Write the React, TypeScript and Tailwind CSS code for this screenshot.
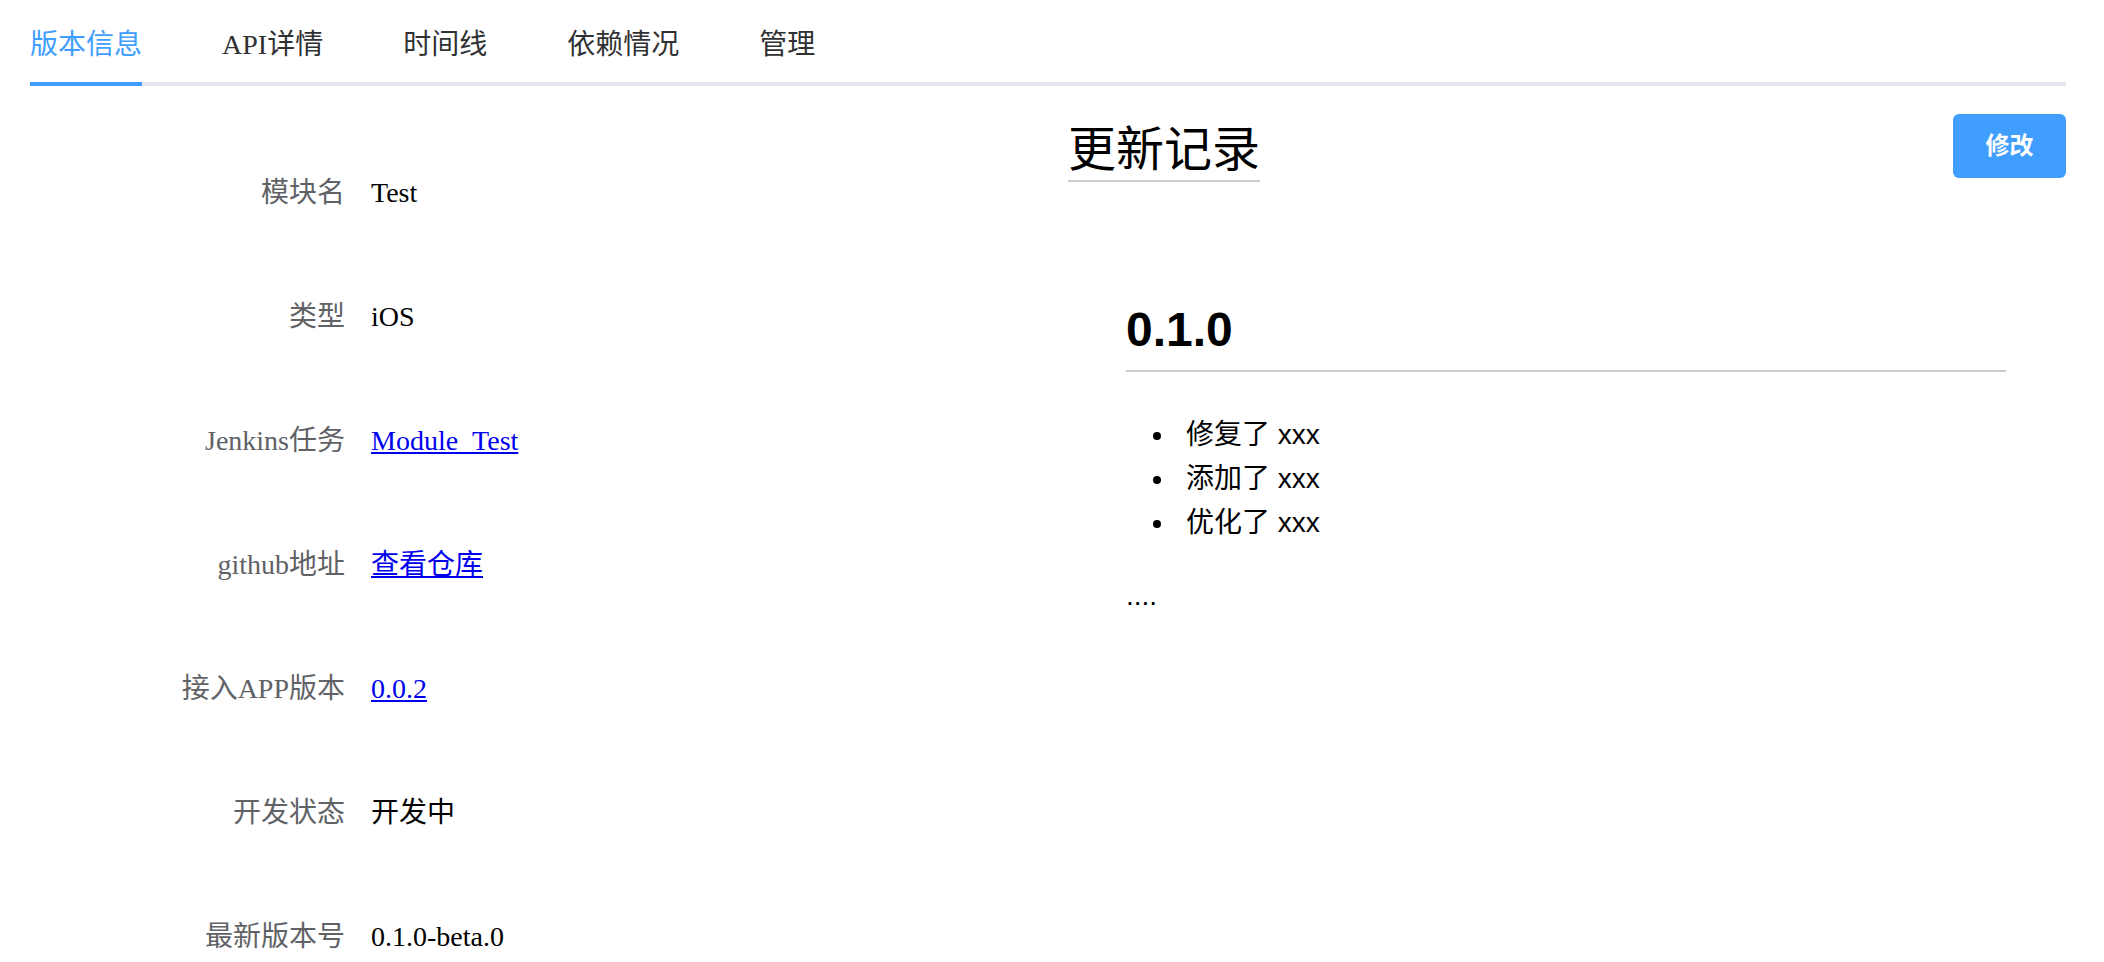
import React from 'react';

const tabs = ['版本信息', 'API详情', '时间线', '依赖情况', '管理'];

const fields: { label: string; value: string; link?: boolean }[] = [
  { label: '模块名', value: 'Test' },
  { label: '类型', value: 'iOS' },
  { label: 'Jenkins任务', value: 'Module_Test', link: true },
  { label: 'github地址', value: '查看仓库', link: true },
  { label: '接入APP版本', value: '0.0.2', link: true },
  { label: '开发状态', value: '开发中' },
  { label: '最新版本号', value: '0.1.0-beta.0' },
];

const changes = ['修复了 xxx', '添加了 xxx', '优化了 xxx'];

const serif = "font-['Liberation_Serif','Noto_Sans_CJK_SC',serif]";
const sans = "font-['Liberation_Sans','Noto_Sans_CJK_SC',sans-serif]";

export default function App() {
  return (
    <div className={`h-[962px] overflow-hidden bg-white pl-[30px] pr-[38px] ${serif}`}>
      {/* tab header */}
      <div className="flex h-[86px] border-b-4 border-[#e4e7ed]">
        {tabs.map((t, i) => (
          <div
            key={t}
            className={`flex items-center pt-[8px] text-[28px] -mb-[4px] ${i === 0 ? 'pr-[40px]' : 'px-[40px]'} ${i === 4 ? 'pr-0' : ''}`}
          >
            <span
              className={`flex h-full items-center border-b-4 ${
                i === 0 ? 'border-[#409eff] text-[#409eff]' : 'border-transparent text-[#303133]'
              }`}
            >
              {t}
            </span>
          </div>
        ))}
      </div>

      <div className="grid grid-cols-2">
        {/* left: module info */}
        <div className="pt-[67px]">
          {fields.map((f) => (
            <div key={f.label} className="mb-[44px] flex h-[80px] items-center text-[28px] leading-[80px]">
              <div className="w-[315px] text-right text-[#606266]">{f.label}</div>
              <div className="ml-[26px] text-black">
                {f.link ? (
                  <a href="#" className="text-[#0000ee] underline">
                    {f.value}
                  </a>
                ) : (
                  f.value
                )}
              </div>
            </div>
          ))}
        </div>

        {/* right: changelog */}
        <div className="flex flex-col">
          <div className="flex items-start justify-between">
            <h1 className="ml-[20px] mt-[40px] border-b-2 border-[#cccccc] pb-[6px] text-[48px] leading-[48px] text-black">
              更新记录
            </h1>
            <button className={`mt-[28px] h-[64px] w-[113px] rounded-[6px] bg-[#409eff] text-[24px] font-bold text-white ${sans}`}>
              修改
            </button>
          </div>

          <div className={`ml-[78px] mr-[60px] text-black ${sans}`}>
            <h2 className="mt-[118px] border-b-2 border-[#cccccc] pb-[10px] text-[48px] font-bold leading-[60px]">0.1.0</h2>
            <ul className="mt-[41px] list-disc pl-[50px] text-[28px] leading-[44px]">
              {changes.map((c) => (
                <li key={c}>
                  <span className="ml-[10px]">{c}</span>
                </li>
              ))}
            </ul>
            <p className="mt-[29px] text-[28px] leading-[44px]">....</p>
          </div>
        </div>
      </div>
    </div>
  );
}
